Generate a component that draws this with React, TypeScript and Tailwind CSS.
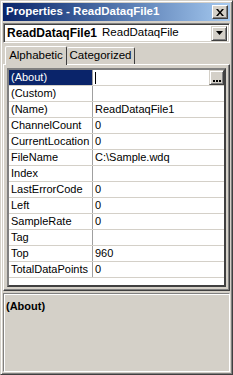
// Fenêtre "Properties" façon Windows 2000 — grille de propriétés d'un contrôle
const rows: [string, string][] = [
  ["(About)", ""],
  ["(Custom)", ""],
  ["(Name)", "ReadDataqFile1"],
  ["ChannelCount", "0"],
  ["CurrentLocation", "0"],
  ["FileName", "C:\\Sample.wdq"],
  ["Index", ""],
  ["LastErrorCode", "0"],
  ["Left", "0"],
  ["SampleRate", "0"],
  ["Tag", ""],
  ["Top", "960"],
  ["TotalDataPoints", "0"],
];

const font = { fontFamily: '"Liberation Sans", Arial, sans-serif' };

function CloseButton() {
  return (
    <div className="w-[16px] h-[14px] bg-[#d4d0c8] border-t border-l border-white border-r border-b border-r-[#404040] border-b-[#404040] flex items-center justify-center shadow-[inset_-1px_-1px_0_#808080]">
      <svg width="8" height="7" viewBox="0 0 8 7">
        <path d="M0 0h2l2 2.5L6 0h2L5 3.5 8 7H6L4 4.5 2 7H0l3-3.5z" fill="#000" />
      </svg>
    </div>
  );
}

function DropButton() {
  return (
    <div className="w-[16px] h-[15px] bg-[#d4d0c8] border-t border-l border-[#d4d0c8] border-r border-b border-r-[#404040] border-b-[#404040] flex items-center justify-center shadow-[inset_1px_1px_0_#fff,inset_-1px_-1px_0_#808080]">
      <svg width="7" height="4" viewBox="0 0 7 4">
        <path d="M0 0h7L3.5 4z" fill="#000" />
      </svg>
    </div>
  );
}

export default function App() {
  return (
    <div
      className="w-[233px] h-[375px] bg-[#d4d0c8] flex flex-col p-[2px] border border-[#d4d0c8] border-r-[#404040] border-b-[#404040] shadow-[inset_1px_1px_0_#fff,inset_-1px_-1px_0_#808080] text-[11px] text-black overflow-hidden"
      style={font}
    >
      {/* barre de titre */}
      <div className="h-[18px] flex items-center justify-between pl-[3px] pr-[2px] bg-gradient-to-r from-[#0a246a] to-[#a6caf0]">
        <span className="text-white font-bold text-[11.5px] leading-none">Properties - ReadDataqFile1</span>
        <CloseButton />
      </div>

      {/* combo de l'objet sélectionné */}
      <div className="mt-[2px] h-[20px] bg-white flex items-center border border-[#808080] border-r-white border-b-white shadow-[inset_1px_1px_0_#404040,inset_-1px_-1px_0_#d4d0c8] pl-[3px] pr-[2px]">
        <span className="font-bold text-[12px]">ReadDataqFile1</span>
        <span className="ml-[5px] text-[11.5px]">ReadDataqFile</span>
        <div className="ml-auto">
          <DropButton />
        </div>
      </div>

      {/* onglets */}
      <div className="mt-[2px] flex items-end h-[19px] pl-[2px] relative z-10">
        <div className="h-[19px] w-[62px] justify-center flex items-center bg-[#d4d0c8] border-t border-l border-white border-r border-r-[#404040] rounded-t-[2px] -mb-[1px] pb-[1px] text-[11.5px]">
          Alphabetic
        </div>
        <div className="h-[17px] w-[68px] justify-center flex items-center bg-[#d4d0c8] border-t border-white border-r border-r-[#404040] rounded-t-[2px] text-[11.5px]">
          Categorized
        </div>
      </div>

      {/* panneau de l'onglet + grille */}
      <div className="h-[227px] border-t border-l border-white border-r border-b border-r-[#404040] border-b-[#404040] shadow-[inset_-1px_-1px_0_#808080] p-[3px]">
        <div className="h-full bg-white border-2 border-[#808080] border-r-[#404040] border-b-[#404040] flex flex-col overflow-hidden">
          {rows.map(([name, value], i) => (
            <div key={name} className="h-[16px] flex border-b border-[#d4d0c8] shrink-0">
              <div
                className={
                  "w-[84px] pl-[2px] flex items-center border-r border-[#a0a0a0] " +
                  (i === 0 ? "bg-[#0a246a] text-white" : "")
                }
              >
                {name}
              </div>
              <div className="flex-1 flex items-center pl-[2px]">
                {i === 0 ? (
                  <>
                    <div className="w-px h-[12px] bg-black" />
                    <div className="ml-auto w-[15px] h-[15px] bg-[#d4d0c8] border border-[#d4d0c8] border-r-[#404040] border-b-[#404040] shadow-[inset_1px_1px_0_#fff,inset_-1px_-1px_0_#808080] flex items-end justify-center pb-[2px] gap-[1px]">
                      <div className="w-[2px] h-[2px] bg-black" />
                      <div className="w-[2px] h-[2px] bg-black" />
                      <div className="w-[2px] h-[2px] bg-black" />
                    </div>
                  </>
                ) : (
                  value
                )}
              </div>
            </div>
          ))}
        </div>
      </div>

      {/* zone de description */}
      <div className="mt-[2px] flex-1 border border-[#808080] border-r-white border-b-white shadow-[inset_1px_1px_0_#fff] px-[2px] pt-[4px]">
        <span className="font-bold">(About)</span>
      </div>
    </div>
  );
}
